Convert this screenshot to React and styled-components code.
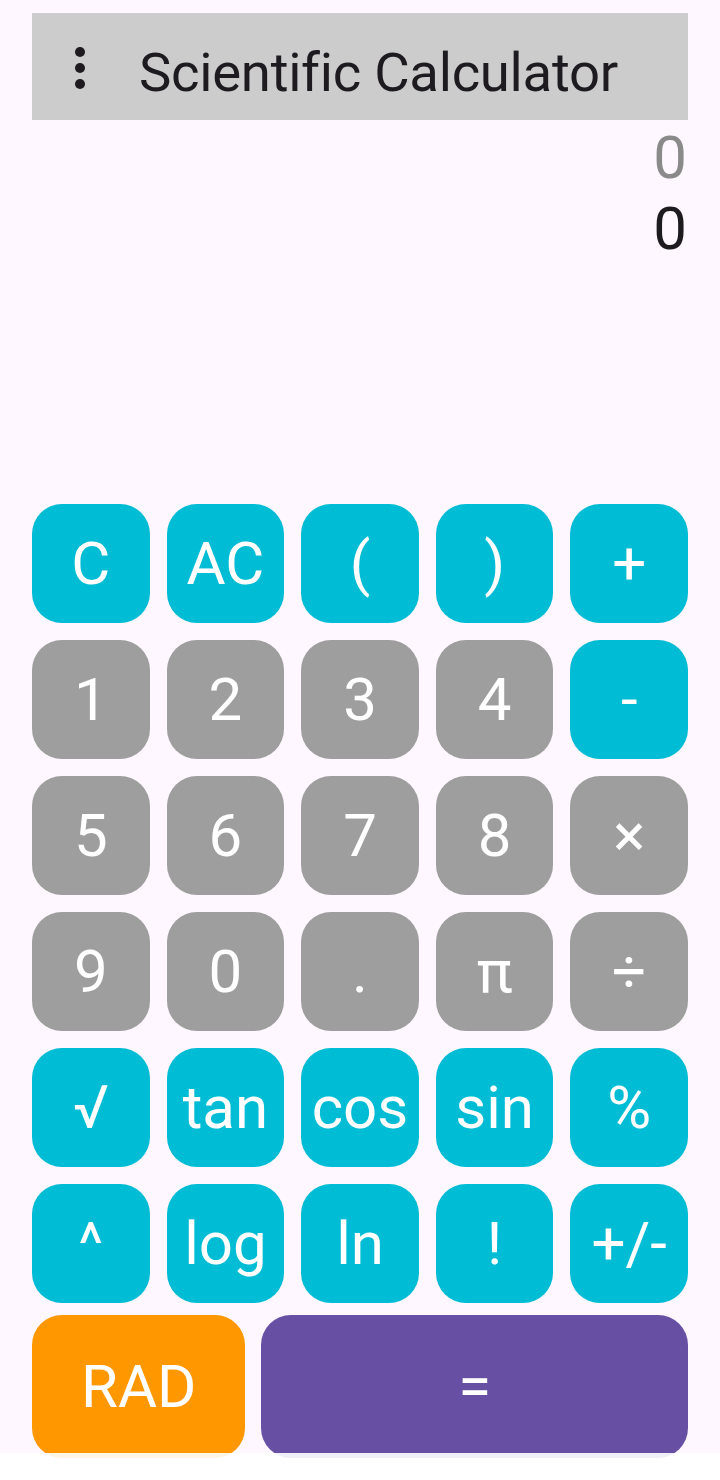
import React from "react";
import styled, { createGlobalStyle } from "styled-components";

const GlobalStyle = createGlobalStyle`
  html, body {
    margin: 0;
    padding: 0;
    background-color: #fef7ff;
    font-family: Roboto, "Noto Sans", sans-serif;
  }
`;

const Page = styled.div`
  width: 720px;
  height: 1480px;
  box-sizing: border-box;
  padding: 13px 32px 0;
  display: flex;
  flex-direction: column;
  background-color: #fef7ff;
  overflow: hidden;
`;

const Toolbar = styled.div`
  height: 107px;
  box-sizing: border-box;
  background-color: #cccccc;
  display: flex;
  align-items: center;
  padding: 10px 0 0 43px;
  gap: 54px;
`;

const MenuDots = styled.div`
  display: flex;
  flex-direction: column;
  gap: 6px;
  margin-top: -8px;
  span {
    width: 10px;
    height: 10px;
    border-radius: 50%;
    background-color: #1d1b20;
  }
`;

const Title = styled.h1`
  margin: 0;
  font-size: 54.5px;
  font-weight: 400;
  color: #1d1b20;
  letter-spacing: -0.3px;
`;

const Display = styled.div`
  height: 384px;
  box-sizing: border-box;
  display: flex;
  flex-direction: column;
  align-items: flex-end;
  padding-top: 2px;
`;

const DisplayLine = styled.div`
  font-size: 60px;
  line-height: 71px;
  color: ${(p) => (p.$muted ? "#8a8a8a" : "#1d1b20")};
  margin-right: 1px;
`;

const Keypad = styled.div`
  display: grid;
  grid-template-columns: repeat(5, 1fr);
  grid-auto-rows: 119px;
  gap: 17px 17px;
`;

const Key = styled.button`
  border: none;
  outline: none;
  padding: 0;
  border-radius: 30px;
  background-color: ${(p) => p.$bg};
  color: #ffffff;
  font-family: Roboto, "Noto Sans", sans-serif;
  font-size: 60px;
  display: flex;
  align-items: center;
  justify-content: center;
  cursor: pointer;
`;

const BottomRow = styled.div`
  display: flex;
  gap: 16px;
  margin-top: 12px;
  height: 143px;
`;

const WideKey = styled(Key)`
  flex: ${(p) => p.$grow};
`;

const NavBar = styled.div`
  position: fixed;
  left: 0;
  right: 0;
  bottom: 0;
  height: 27px;
  background-color: rgba(255, 255, 255, 0.9);
`;

const CYAN = "#00bcd4";
const GRAY = "#9e9e9e";

const keys = [
  ["C", CYAN], ["AC", CYAN], ["(", CYAN], [")", CYAN], ["+", CYAN],
  ["1", GRAY], ["2", GRAY], ["3", GRAY], ["4", GRAY], ["-", CYAN],
  ["5", GRAY], ["6", GRAY], ["7", GRAY], ["8", GRAY], ["×", GRAY],
  ["9", GRAY], ["0", GRAY], [".", GRAY], ["π", GRAY], ["÷", GRAY],
  ["√", CYAN], ["tan", CYAN], ["cos", CYAN], ["sin", CYAN], ["%", CYAN],
  ["^", CYAN], ["log", CYAN], ["ln", CYAN], ["!", CYAN], ["+/-", CYAN],
];

const App = () => {
  return (
    <>
      <GlobalStyle />
      <Page>
        <Toolbar>
          <MenuDots>
            <span />
            <span />
            <span />
          </MenuDots>
          <Title>Scientific Calculator</Title>
        </Toolbar>
        <Display>
          <DisplayLine $muted>0</DisplayLine>
          <DisplayLine>0</DisplayLine>
        </Display>
        <Keypad>
          {keys.map(([text, bg]) => (
            <Key key={text} $bg={bg}>
              {text}
            </Key>
          ))}
        </Keypad>
        <BottomRow>
          <WideKey $bg="#ff9800" $grow={1}>
            RAD
          </WideKey>
          <WideKey $bg="#6750a4" $grow={2}>
            =
          </WideKey>
        </BottomRow>
      </Page>
      <NavBar />
    </>
  );
};

export default App;
